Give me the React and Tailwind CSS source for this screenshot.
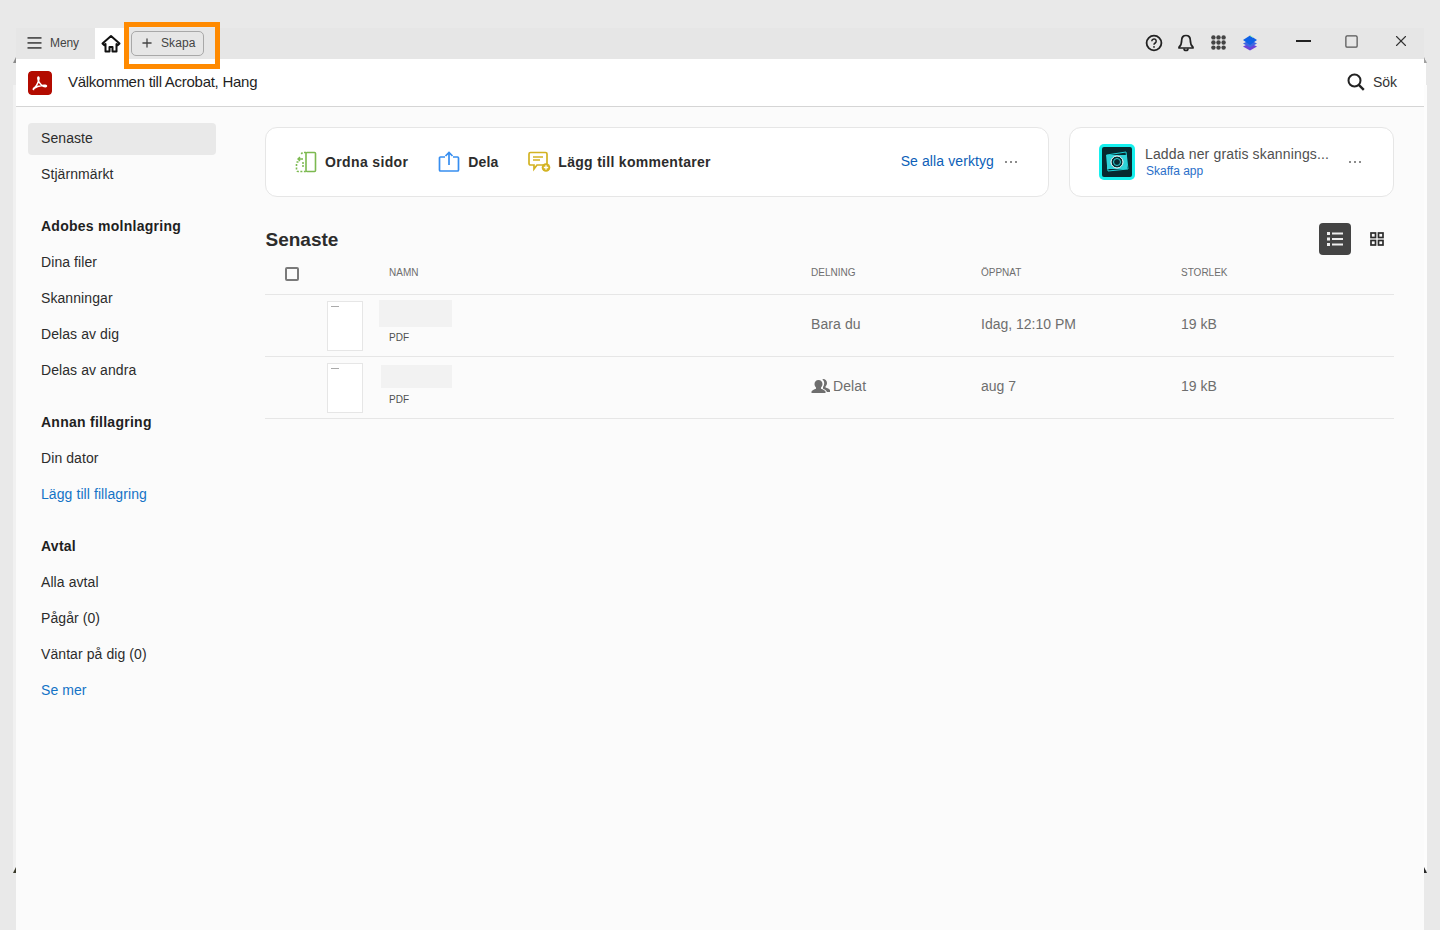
import { Plus, X, Square } from "lucide-react";

const font = "font-['Liberation_Sans',Arial,sans-serif]";

function SideItem({ label, active, link }) {
  return (
    <div
      className={`h-8 mb-1 flex items-center pl-[13px] pb-[2px] rounded text-sm tracking-[0.08px] ${
        active ? "bg-[#e9e9e9]" : ""
      } ${link ? "text-[#1473c6]" : "text-[#2c2c2c]"}`}
    >
      {label}
    </div>
  );
}

function SideHead({ label }) {
  return (
    <div className="h-8 mt-5 mb-1 flex items-center pl-[13px] pb-[2px] text-sm font-bold text-[#1f1f1f] tracking-[0.26px]">
      {label}
    </div>
  );
}

function Dots() {
  return (
    <div className="flex gap-[3px]">
      <div className="w-[2px] h-[2px] rounded-full bg-[#666]" />
      <div className="w-[2px] h-[2px] rounded-full bg-[#666]" />
      <div className="w-[2px] h-[2px] rounded-full bg-[#666]" />
    </div>
  );
}

function MenuIcon() {
  return (
    <svg width="16" height="14" viewBox="0 0 16 14" fill="#555">
      <rect x="0.500" y="1" width="14" height="1.800" />
      <rect x="0.500" y="6" width="14" height="1.800" />
      <rect x="0.500" y="11" width="14" height="1.800" />
    </svg>
  );
}

function HomeIcon() {
  return (
    <svg width="20" height="20" viewBox="0 0 20 20" fill="none" stroke="#111" strokeWidth="2" strokeLinejoin="round">
      <path d="M1.500 9.500 10 2l8.500 7.500-1.600 1.600L15.500 10v7.500h-4v-4.500h-3v4.500h-4V10l-1.400 1.100z" />
    </svg>
  );
}

function HelpIcon() {
  return (
    <svg width="18" height="18" viewBox="0 0 18 18" fill="none" stroke="#222" strokeWidth="1.800">
      <circle cx="9" cy="9" r="7.400" />
      <path d="M6.800 7.200a2.200 2.200 0 1 1 3.400 1.800c-.8.500-1.200 1-1.200 1.800" strokeWidth="1.500" />
      <circle cx="9" cy="12.900" r=".9" fill="#222" stroke="none" />
    </svg>
  );
}

function BellIcon() {
  return (
    <svg width="16" height="18" viewBox="0 0 16 18" fill="none" stroke="#222" strokeWidth="1.700" strokeLinejoin="round">
      <path d="M8 1.500c-2.800 0-4.300 2-4.300 4.500 0 3.500-.7 5.500-2.700 7.200v.8h14v-.8c-2-1.700-2.700-3.700-2.700-7.200 0-2.500-1.500-4.500-4.300-4.500z" />
      <path d="M6 14.500a2 2 0 0 0 4 0" />
    </svg>
  );
}

function AppsIcon() {
  const dots = [];
  for (let y = 0; y < 3; y++) {
    for (let x = 0; x < 3; x++) {
      dots.push(<circle key={`${x}-${y}`} cx={2.400 + x * 5.100} cy={2.400 + y * 5.100} r="2.200" fill="#444" />);
    }
  }
  return (
    <svg width="15" height="15" viewBox="0 0 15 15">
      {dots}
    </svg>
  );
}

function StackIcon() {
  return (
    <svg width="16" height="18" viewBox="0 0 16 18">
      <path d="M8 9 15 12.500 8 16.500 1 12.500z" fill="#6a45d8" />
      <path d="M8 6 15 9.500 8 13.500 1 9.500z" fill="#3f68e0" />
      <path d="M8 1.500 15 6 8 11 1 6z" fill="#0f62e6" />
      <path d="M8 1.500 11 3.400" stroke="#a5efc0" strokeWidth="1" />
    </svg>
  );
}

function SearchIcon() {
  return (
    <svg width="18" height="18" viewBox="0 0 18 18" fill="none" stroke="#222" strokeWidth="2">
      <circle cx="7.500" cy="7.500" r="6" />
      <path d="m11.800 11.800 5 5" strokeWidth="2.400" />
    </svg>
  );
}

function AcrobatLogo() {
  return (
    <svg width="24" height="24" viewBox="0 0 24 24" className="rounded">
      <rect width="24" height="24" rx="3.500" fill="#b30b00" />
      <path
        d="M5.500 17.500c1.800-1 3.800-4 5-7.500.5-1.500.6-3.500.1-3.900-.4-.3-.8.2-.8 1.200 0 2.700 3 7 5.500 8 1.500.6 3.200.5 3.200-.2 0-.8-2-1-4.500-.7-3 .4-6 1.500-7.500 2.700-1 .8-1.600 1.500-1 1.500z"
        fill="none"
        stroke="#fff"
        strokeWidth="1.500"
      />
    </svg>
  );
}

function OrganizeIcon() {
  return (
    <svg width="22" height="22" viewBox="0 0 22 22" fill="none" stroke="#7cb950" strokeWidth="1.600">
      <rect x="11" y="1.500" width="9.500" height="19" rx="1" />
      <path d="M11 1.500H7.500L5.500 4M1.500 13v6a1.500 1.500 0 0 0 1.500 1.500h8" strokeDasharray="2 1.500" />
      <path d="M3 8h5M5 6 3 8l2 2M1.500 11h2" strokeWidth="1.400" />
      <path d="M7 12h2M7 15h2" strokeWidth="1.400" />
    </svg>
  );
}

function ShareIcon() {
  return (
    <svg width="22" height="22" viewBox="0 0 22 22" fill="none" stroke="#378ef0" strokeWidth="1.700">
      <path d="M7 6H2.500a1 1 0 0 0-1 1v12a1 1 0 0 0 1 1h17a1 1 0 0 0 1-1V7a1 1 0 0 0-1-1H15" strokeLinejoin="round" />
      <path d="M11 14V1.500M7.500 5 11 1.500 14.500 5" />
    </svg>
  );
}

function CommentIcon() {
  return (
    <svg width="24" height="22" viewBox="0 0 24 22" fill="none">
      <path
        d="M2.500 1.500h15a1.500 1.500 0 0 1 1.500 1.500v9.500a1.500 1.500 0 0 1-1.500 1.500H9L6 18v-4H2.500A1.500 1.500 0 0 1 1 12.500V3a1.500 1.500 0 0 1 1.500-1.500z"
        stroke="#d3b323"
        strokeWidth="1.700"
      />
      <path d="M5 6h10M5 9h7" stroke="#d3b323" strokeWidth="1.600" />
      <circle cx="18" cy="16.500" r="4.300" fill="#d3b323" />
      <path d="M18 14.300v4.400M15.800 16.500h4.400" stroke="#fff" strokeWidth="1.300" />
    </svg>
  );
}

function ScanLogo() {
  return (
    <svg width="36" height="36" viewBox="0 0 36 36">
      <rect width="36" height="36" rx="5" fill="#16f0ee" />
      <rect x="3" y="3" width="30" height="30" rx="2" fill="#062a30" />
      <path d="M7.500 11 27 8l2 17-20 2z" fill="none" stroke="#1bd3d8" strokeWidth="1" />
      <rect x="8" y="11" width="20" height="14" fill="#2fd2d8" />
      <circle cx="18" cy="18" r="6" fill="#062a30" stroke="#fff" strokeWidth="1" />
      <circle cx="18" cy="18" r="3.500" fill="#062a30" stroke="#2fd2d8" strokeWidth="1" />
    </svg>
  );
}

function ListIcon() {
  return (
    <svg width="16" height="14" viewBox="0 0 16 14" fill="#eee">
      <rect x="0" y="0" width="3" height="3" />
      <rect x="0" y="5.500" width="3" height="3" />
      <rect x="0" y="11" width="3" height="3" />
      <rect x="5" y="0.500" width="11" height="2" />
      <rect x="5" y="6" width="11" height="2" />
      <rect x="5" y="11.500" width="11" height="2" />
    </svg>
  );
}

function GridIcon() {
  return (
    <svg width="14" height="14" viewBox="0 0 14 14" fill="none" stroke="#2c2c2c" strokeWidth="1.700">
      <rect x="1" y="1" width="4.500" height="4.500" />
      <rect x="8.500" y="1" width="4.500" height="4.500" />
      <rect x="1" y="8.500" width="4.500" height="4.500" />
      <rect x="8.500" y="8.500" width="4.500" height="4.500" />
    </svg>
  );
}

function PeopleIcon() {
  return (
    <svg width="20" height="16" viewBox="0 0 20 16" fill="#6e6e6e">
      <path d="M12 1c2.500 0 4 1.800 4 4 0 1.500-.7 2.800-1.500 3.500v1c1.800.6 4 1.400 4.500 2.500v2h-3c-.4-1.500-2.500-2.700-4-3.300V9c.8-1 1.200-2.300 1.200-3.700 0-1.700-.7-3-1.800-3.800z" />
      <path d="M7.500 2C10 2 11.500 3.800 11.500 6c0 1.500-.7 2.800-1.500 3.500v1.200c2 .6 4 1.500 4.500 2.800V15H.5v-1.500c.5-1.300 2.500-2.200 4.500-2.800V9.500C4.200 8.800 3.500 7.500 3.500 6c0-2.200 1.500-4 4-4z" />
    </svg>
  );
}

function Thumb() {
  return (
    <div className="w-9 h-[50px] bg-white border border-[#e6e6e6] pt-1 pl-[3px]">
      <div className="w-2 h-px bg-[#aaa]" />
    </div>
  );
}

function FileRow({ skeletonClass, share, opened }) {
  return (
    <div className="h-[62px] border-b border-[#e6e6e6] flex items-center">
      <div className="w-[62px] shrink-0" />
      <Thumb />
      <div className="w-[448px] shrink-0 self-start pt-[5px] relative">
        <div className={`bg-[#f2f2f2] ${skeletonClass}`} />
        <div className="absolute left-[26px] top-[37px] text-[10px] leading-3 text-[#505050]">PDF</div>
      </div>
      <div className="w-[170px] shrink-0 text-sm text-[#6e6e6e] flex items-center gap-[2px] -mt-[3px] tracking-[0.1px]">{share}</div>
      <div className="w-[200px] shrink-0 text-sm text-[#6e6e6e] -mt-[3px]">{opened}</div>
      <div className="text-sm text-[#6e6e6e] -mt-[3px]">19 kB</div>
    </div>
  );
}

// scraps of the window behind, poking out at the corners
function Sliver({ className }) {
  return <div className={`absolute w-[3px] h-[6px] [clip-path:polygon(100%_0,100%_100%,0_100%)] ${className}`} />;
}

export default function App() {
  return (
    <div className={`${font} relative h-[930px] overflow-hidden bg-[#e9e9e9] pt-7 pl-4 pr-[14px]`}>
      {/* Title bar */}
      <div className="h-[31px] w-[1408px] bg-[#e6e6e6] flex items-center">
        <div className="flex items-center w-[79px] h-full pl-[11px] gap-[7px] text-[#444] pb-[2px]">
          <MenuIcon />
          <span className="text-xs tracking-[-0.1px]">Meny</span>
        </div>
        <div className="w-8 h-full bg-white flex items-center justify-center">
          <HomeIcon />
        </div>
        <div className="ml-1 h-[25px] w-[73px] border border-[#a8a8a8] rounded-[5px] flex items-center pl-[8px] gap-[7px] text-[#444] pb-[1px]">
          <Plus className="w-[14px] h-[14px]" strokeWidth={2.200} />
          <span className="text-xs tracking-[0.1px]">Skapa</span>
        </div>
        <div className="ml-auto flex items-center h-full pb-[2px]">
          <HelpIcon />
          <div className="ml-[15px]"><BellIcon /></div>
          <div className="ml-[17px]"><AppsIcon /></div>
          <div className="ml-4"><StackIcon /></div>
          <div className="ml-[38px] w-[15px] h-[2px] bg-[#222] -mt-[3px]" />
          <Square className="ml-[33px] w-[15px] h-[15px] text-[#555] -mt-[3px]" strokeWidth={2} absoluteStrokeWidth />
          <X className="ml-[33px] mr-[14px] w-[18px] h-[18px] text-[#333] -mt-[3px]" strokeWidth={1.500} />
        </div>
      </div>

      {/* Acrobat header */}
      <div className="h-12 w-[1410px] bg-white border-b border-[#d5d5d5] flex items-center pl-3">
        <AcrobatLogo />
        <div className="ml-4 text-[15px] text-[#1f1f1f] tracking-[-0.27px]">Välkommen till Acrobat, Hang</div>
        <div className="ml-auto flex items-center pr-[29px] -mt-[2px]">
          <SearchIcon />
          <span className="ml-2 text-sm text-[#333]">Sök</span>
        </div>
      </div>

      {/* Body */}
      <div className="w-[1408px] h-[823px] bg-[#fbfbfb] flex">
        <aside className="w-[188px] ml-3 pt-4 shrink-0">
          <SideItem label="Senaste" active />
          <SideItem label="Stjärnmärkt" />
          <SideHead label="Adobes molnlagring" />
          <SideItem label="Dina filer" />
          <SideItem label="Skanningar" />
          <SideItem label="Delas av dig" />
          <SideItem label="Delas av andra" />
          <SideHead label="Annan fillagring" />
          <SideItem label="Din dator" />
          <SideItem label="Lägg till fillagring" link />
          <SideHead label="Avtal" />
          <SideItem label="Alla avtal" />
          <SideItem label="Pågår (0)" />
          <SideItem label="Väntar på dig (0)" />
          <SideItem label="Se mer" link />
        </aside>

        <main className="ml-[49px] w-[1129px] pt-5">
          {/* Tool cards */}
          <div className="flex gap-5">
            <div className="w-[784px] h-[70px] bg-white border border-[#e6e6e6] rounded-xl flex items-center pl-[29px] pr-[31px]">
              <OrganizeIcon />
              <span className="ml-[8px] text-sm font-bold text-[#2c2c2c] tracking-[0.36px]">Ordna sidor</span>
              <div className="ml-[30px]"><ShareIcon /></div>
              <span className="ml-[8px] text-sm font-bold text-[#2c2c2c] tracking-[0.1px]">Dela</span>
              <div className="ml-[30px]"><CommentIcon /></div>
              <span className="ml-[6px] text-sm font-bold text-[#2c2c2c] tracking-[0.3px]">Lägg till kommentarer</span>
              <span className="ml-auto text-sm text-[#0d5fb8] pb-[2px] tracking-[0.1px]">Se alla verktyg</span>
              <div className="ml-[11px]"><Dots /></div>
            </div>
            <div className="w-[325px] h-[70px] bg-white border border-[#e6e6e6] rounded-xl flex items-center pl-[29px]">
              <ScanLogo />
              <div className="ml-[10px] w-[196px] -mt-px">
                <div className="text-sm leading-[18px] text-[#505050] whitespace-nowrap tracking-[0.15px]">Ladda ner gratis skannings...</div>
                <div className="text-xs leading-4 text-[#2a6fc9] pl-px">Skaffa app</div>
              </div>
              <div className="ml-2"><Dots /></div>
            </div>
          </div>

          {/* Heading + view switch */}
          <div className="mt-[26px] flex items-center h-8">
            <h2 className="text-[19px] font-bold text-[#2c2c2c] pl-[0.5px] pt-[2px]">Senaste</h2>
            <div className="ml-auto w-8 h-8 rounded bg-[#444] flex items-center justify-center">
              <ListIcon />
            </div>
            <div className="ml-[19px] mr-[10px]"><GridIcon /></div>
          </div>

          {/* Table */}
          <div className="h-[43px] -mt-[3px] border-b border-[#e6e6e6] flex items-center text-[10px] text-[#6e6e6e]">
            <div className="w-[124px] shrink-0 pl-5">
              <div className="w-[14px] h-[14px] border-2 border-[#7a7a7a] rounded-[2px] mt-[1px]" />
            </div>
            <div className="w-[422px] shrink-0 -mt-[2px] tracking-[0.05px]">NAMN</div>
            <div className="w-[170px] shrink-0 -mt-[2px]">DELNING</div>
            <div className="w-[200px] shrink-0 -mt-[2px]">ÖPPNAT</div>
            <div className="-mt-[2px]">STORLEK</div>
          </div>
          <FileRow skeletonClass="ml-[16px] w-[73px] h-[27px]" share="Bara du" opened="Idag, 12:10 PM" />
          <FileRow skeletonClass="ml-[18px] w-[71px] h-[23px] mt-[3px]" share={<><PeopleIcon /><span>Delat</span></>} opened="aug 7" />
        </main>
      </div>

      {/* Edge strips and corner slivers from the window behind */}
      <div className="absolute left-[13px] top-[85px] w-[3px] h-[785px] bg-[#f1f1f1]" />
      <div className="absolute left-[1424px] top-[85px] w-[3px] h-[785px] bg-[#fdfdfd]" />
      <Sliver className="left-[13px] top-[57px] bg-[#8a8a8a]" />
      <Sliver className="left-[1424px] top-[57px] bg-[#a0a0a0] -scale-x-100" />
      <Sliver className="left-[13px] top-[867px] bg-[#3a3a2a]" />
      <Sliver className="left-[1424px] top-[867px] bg-[#2a2a2a] -scale-x-100" />

      {/* Highlight frame */}
      <div className="absolute left-[124px] top-[22px] w-24 h-[47px] border-[5px] border-[#ff8a00]" />
    </div>
  );
}
